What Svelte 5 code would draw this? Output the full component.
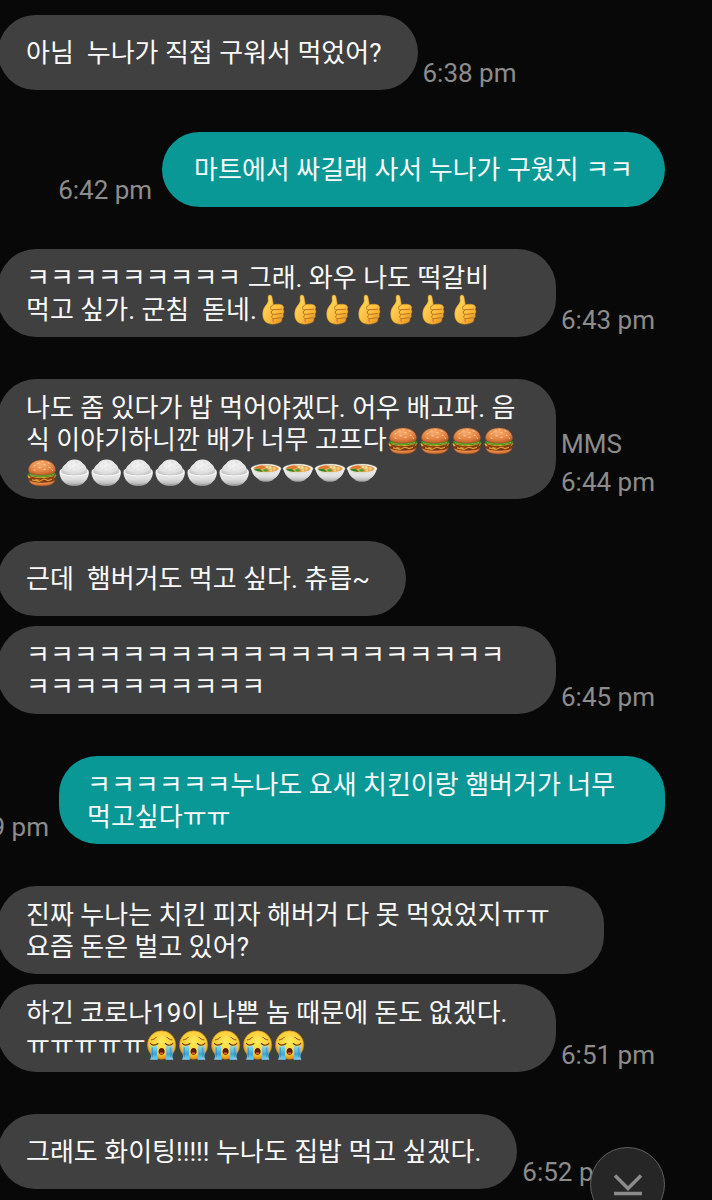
<script>
  const messages = [
    { lines: [{ text: '아님  누나가 직접 구워서 먹었어?' }], time: '6:38 pm' },
    { sent: true, lines: [{ text: '마트에서 싸길래 사서 누나가 구웠지 ㅋㅋ' }], time: '6:42 pm' },
    {
      size: 'wide',
      lines: [
        { text: 'ㅋㅋㅋㅋㅋㅋㅋㅋㅋ 그래. 와우 나도 떡갈비' },
        { text: '먹고 싶가. 군침  돋네.', emoji: Array(7).fill('thumb') }
      ],
      time: '6:43 pm'
    },
    {
      size: 'wide',
      lines: [
        { text: '나도 좀 있다가 밥 먹어야겠다. 어우 배고파. 음' },
        { text: '식 이야기하니깐 배가 너무 고프다', emoji: Array(4).fill('burger') },
        { text: '', emoji: ['burger', ...Array(6).fill('rice'), ...Array(4).fill('stew')] }
      ],
      kind: 'MMS',
      time: '6:44 pm'
    },
    { lines: [{ text: '근데  햄버거도 먹고 싶다. 츄릅~' }] },
    {
      size: 'wide',
      grouped: true,
      lines: [{ text: 'ㅋㅋㅋㅋㅋㅋㅋㅋㅋㅋㅋㅋㅋㅋㅋㅋㅋㅋㅋㅋ' }, { text: 'ㅋㅋㅋㅋㅋㅋㅋㅋㅋㅋ' }],
      time: '6:45 pm'
    },
    {
      sent: true,
      size: 'full',
      lines: [{ text: 'ㅋㅋㅋㅋㅋㅋ누나도 요새 치킨이랑 햄버거가 너무' }, { text: '먹고싶다ㅠㅠ' }],
      time: '6:49 pm'
    },
    {
      size: 'full',
      lines: [{ text: '진짜 누나는 치킨 피자 해버거 다 못 먹었었지ㅠㅠ' }, { text: '요즘 돈은 벌고 있어?' }]
    },
    {
      size: 'wide',
      grouped: true,
      lines: [
        { text: '하긴 코로나19이 나쁜 놈 때문에 돈도 없겠다.' },
        { text: 'ㅠㅠㅠㅠㅠ', emoji: Array(5).fill('cry') }
      ],
      time: '6:51 pm'
    },
    { lines: [{ text: '그래도 화이팅!!!!! 누나도 집밥 먹고 싶겠다.' }], time: '6:52 pm' }
  ];
</script>

<svg class="defs" width="0" height="0" aria-hidden="true">
  <defs>
    <linearGradient id="skin" x1="0" y1="0" x2=".8" y2="1">
      <stop offset="0" stop-color="#ffdc68" /><stop offset=".65" stop-color="#fdbf40" /><stop offset="1" stop-color="#e39426" />
    </linearGradient>
    <radialGradient id="bun" cx=".45" cy=".3" r=".75">
      <stop offset="0" stop-color="#f7ab6c" /><stop offset=".6" stop-color="#e58546" /><stop offset="1" stop-color="#b9581f" />
    </radialGradient>
    <radialGradient id="grain" cx=".5" cy=".35" r=".65">
      <stop offset="0" stop-color="#f4f4f4" /><stop offset=".7" stop-color="#e2e2e2" /><stop offset="1" stop-color="#c4c4c4" />
    </radialGradient>
    <linearGradient id="bowl" x1="0" y1="0" x2="0" y2="1">
      <stop offset="0" stop-color="#f4f4f4" /><stop offset=".6" stop-color="#dedede" /><stop offset="1" stop-color="#acacac" />
    </linearGradient>
    <radialGradient id="face" cx=".5" cy=".4" r=".6">
      <stop offset="0" stop-color="#ffec5c" /><stop offset=".7" stop-color="#fdcb35" /><stop offset="1" stop-color="#dc8c18" />
    </radialGradient>
    <linearGradient id="tear" x1="0" y1="0" x2="0" y2="1">
      <stop offset="0" stop-color="#8edcf5" /><stop offset=".6" stop-color="#3ba6d8" /><stop offset="1" stop-color="#7bd3ee" />
    </linearGradient>

    <symbol id="thumb" viewBox="0 0 32 32">
      <path d="M11.200 2.200C11.900.6 14 .5 14.800 2.300c.9 2.500.9 5.700 1.600 8.300 3-.5 6-.6 8 .1 2.300.8 2.900 3.100 1.700 4.700 1.300 1.300 1.100 3.500-.2 4.600.9 1.500.4 3.500-1 4.400.3 2-.7 3.700-2.600 4.400-3.800 1.600-8.700 2-12.100.3C7 27.500 5.700 24.300 5.700 20.500c0-3.200.6-5.800 2.200-8 1.800-2.400 3.400-4 3.300-6.500 0-1.500-.4-2.700 0-3.800z" fill="url(#skin)" stroke="#d08a22" stroke-width=".5" />
      <path d="M16.400 10.800c-1.900.6-3.200 2.100-2.900 3.700.2 1.200 1.500 1.500 3 1.300l8.200-.6M16 15.900c-2 .7-2.500 3.400-1 4.200.8.5 2 .3 3.200.2l6.300-.7M16 20.400c-1.500.7-1.900 3.200-.4 4 .9.400 2.200.2 3.200 0l5-.7M16.500 24.700c-1.100.7-1.300 2.500.1 3.300" fill="none" stroke="#bd7417" stroke-width="1" stroke-linecap="round" />
    </symbol>

    <symbol id="burger" viewBox="0 0 32 32">
      <path d="M3 23c0-1.500 26-1.500 26 0 .1 4-3.700 7-13 7S2.900 27 3 23z" fill="url(#bun)" stroke="#95501d" stroke-width=".5" />
      <path d="M2 21.500c0-2 28-2 28 0 .2 2-1.600 3.600-4.500 4.300-6 1.400-13 1.400-19 0C3.600 25.100 1.800 23.500 2 21.500z" fill="#7a3a14" />
      <path d="M1.200 19.500l29.500-.3-2.900 3-4.400-.6-3.200 2.200-4-2-4.800 3.400-4-3.200-4.700.2z" fill="#f3ad2d" />
      <path d="M3 19.600c5 3.400 20 3.200 26.400-.4l-2.100 3.200c-6 1.700-16.500 1.800-22.500-.2z" fill="#8c3d13" />
      <path d="M2 17.500c1-2 27-2 28 0 .7 1.500-.5 2.300-2 2.100-1.600 1-3.400 1.200-5 .8-2 1.300-4.200 1-6 .6-2 .9-4.300.3-5.700-.3-2 .5-4 .1-5.300-.8-2 .3-4.500-.8-4-2.400z" fill="#3c8526" />
      <path d="M4 18.700c5 2 19 2 24-.2" fill="none" stroke="#8abe3a" stroke-width=".8" />
      <path d="M2.500 14C2.700 8 8.400 4 16 4s13.300 4 13.500 10c0 3.800-5.800 5-13.500 5S2.500 17.800 2.500 14z" fill="url(#bun)" stroke="#a65524" stroke-width=".4" />
      <path d="M8 10l1-.6M12 7.200l1.200-.3M13 11.500l1.200.2M18 8.600l1.200.3M22 6.900l1 .4M23 11.300l1.100.2M18 13.300h1.200M8 14l1 .2M26 14l.7.4M16 5.700h1" stroke="#ffe0ad" stroke-width=".9" stroke-linecap="round" />
      <path d="M6 23.900l7 1.500 5-2.300 4 1.500 4-1.400" fill="none" stroke="#e5a338" stroke-width="1.100" />
    </symbol>

    <symbol id="rice" viewBox="0 0 32 32">
      <path d="M1.500 16.200c0-1.700 1-2.900 2.600-3.500h24c1.700.6 2.800 1.800 2.800 3.500-.1 5-2.500 8.700-6 11.200-3.500 3.200-13.800 3.200-17.400 0-3.500-2.500-5.900-6.200-6-11.200z" fill="url(#bowl)" />
      <path d="M3.500 16.500C2.900 12.600 5.500 9.500 8 7.800 10 5 13 3.600 16.400 3.600c3.800 0 6.800 1.500 8.500 4 2.500 1.800 4.700 5 4 8.900-4.500 4.200-21 4.200-25.400 0z" fill="url(#grain)" />
      <path d="M8.500 11l1 .4M13 8l1 .2M18 6.500l1 .3M22 9.500l.7.5M12 14l1-.3M17 11l1 .3M22 14l1-.2M17 16l1 .2" stroke="#cdcdcd" stroke-width=".7" stroke-linecap="round" />
      <path d="M2 16.500c3.500 4.500 25 4.500 28.400 0" fill="none" stroke="#fcfcfc" stroke-width=".9" />
      <path d="M8.500 27.200c4 1.900 11.500 1.900 15.600 0" fill="none" stroke="#999" stroke-width=".6" />
    </symbol>

    <symbol id="stew" viewBox="0 0 32 32">
      <path d="M1.200 12.500c1 5.200 3.600 8.800 7.600 11 2.300 2.800 12.100 2.800 14.400 0 4-2.200 6.700-5.800 7.700-11z" fill="url(#bowl)" />
      <ellipse cx="16" cy="12.500" rx="15" ry="4.400" fill="#f8f8f8" stroke="#bcbcbc" stroke-width=".4" />
      <ellipse cx="16" cy="12.700" rx="12.600" ry="3.500" fill="#e6a552" />
      <path d="M4.500 11.700c1.800-1.700 5-2.300 8.500-2.300l2.500 2.100-4.600 1.800z" fill="#e07a2c" />
      <path d="M4.200 13.200c2.600-.6 5.900-.8 8.800 2.400-4.500.2-7.600-.8-8.800-2.400z" fill="#28842e" />
      <path d="M13 14l3-1.500 3 2.200-4 1.100z" fill="#5a9b34" />
      <circle cx="20" cy="11.800" r="1.700" fill="#f7d9a0" /><circle cx="24.300" cy="12.500" r="1.500" fill="#f4cb84" />
      <circle cx="17" cy="10.900" r="1.200" fill="#f6dfaa" /><circle cx="21" cy="14.400" r="1.200" fill="#f5cf86" />
      <path d="M9.500 24c3.200 1.700 9.800 1.700 13 0" fill="none" stroke="#9a9a9a" stroke-width=".6" />
    </symbol>

    <symbol id="cry" viewBox="0 0 32 32">
      <circle cx="15.600" cy="16" r="14.200" fill="url(#face)" stroke="#c87b16" stroke-width=".5" />
      <path d="M4.600 16.500c1.800 1.200 4.600 1.300 6.400.1V29c.8.4 1 1 .7 1.700H4.400c-.5-.8 0-1.300.5-1.700zM20.200 16.600c1.800 1.200 4.600 1.100 6.400-.1V29c.7.4 1 1 .5 1.700h-7.400c-.4-.8 0-1.300.5-1.700z" fill="url(#tear)" />
      <path d="M6.300 18.500V28M24.800 18.500V28" stroke="#2588bd" stroke-width=".7" />
      <path d="M4.500 14.600c2 1.900 5 1.900 7.500-.1M19.300 14.500c2.400 2 5.500 2 7.500.1" fill="none" stroke="#603006" stroke-width="1.100" stroke-linecap="round" />
      <path d="M5.300 10.900c2-.3 3.900-1.200 5.200-2.800M20.700 8.100c1.300 1.600 3.200 2.500 5.200 2.800" fill="none" stroke="#8e5010" stroke-width="1" stroke-linecap="round" />
      <path d="M12.600 22.600c0-2.400 1.200-3.600 3-3.600s3 1.200 3 3.600-1.200 3.300-3 3.300-3-.9-3-3.300z" fill="#5a1b0a" />
      <path d="M13.500 24.200c1-1.200 3.200-1.200 4.200 0-.9 1.500-3.300 1.500-4.200 0z" fill="#e35d47" />
    </symbol>
  </defs>
</svg>

<main>
  {#each messages as message}
    <article class="row" class:sent={message.sent} class:grouped={message.grouped}>
      <p class="bubble {message.size ?? 'fit'}">
        {#each message.lines as line}
          <span class="line">{line.text}{#each line.emoji ?? [] as name}<svg class="emoji" viewBox="0 0 32 32" aria-hidden="true"><use href="#{name}" /></svg>{/each}</span>
        {/each}
      </p>
      {#if message.time}
        <div class="meta">
          {#if message.kind}<span>{message.kind}</span>{/if}
          <time>{message.time}</time>
        </div>
      {/if}
    </article>
  {/each}
</main>

<button class="latest" type="button" aria-label="↓">
  <svg viewBox="0 0 30 24" aria-hidden="true">
    <path d="M2 2.500L15 15.500 28 2.500M1 20.500H29" fill="none" stroke="#8c8c8c" stroke-width="3.500" />
  </svg>
</button>

<style>
  :global(body) {
    margin: 0;
    background: #080808;
    overflow-x: hidden;
  }

  .defs {
    position: absolute;
  }

  main {
    display: flex;
    flex-direction: column;
    gap: 42px;
    padding: 15px 47px 11px 0;
    overflow: hidden;
    font-family: Roboto, 'Noto Sans CJK KR', sans-serif;
    font-size: 26px;
    line-height: 32px;
  }

  .row {
    display: flex;
    align-items: flex-end;
    gap: 5px;
    margin-left: -2px;
  }

  .row.grouped {
    margin-top: -32px;
  }

  .row.sent {
    flex-direction: row-reverse;
    gap: 10px;
  }

  .bubble {
    box-sizing: border-box;
    display: flex;
    flex-direction: column;
    justify-content: center;
    min-height: 75px;
    margin: 0;
    padding: 0 28px;
    border-radius: 38px;
    background: #404040;
    color: #fafafa;
  }

  .bubble.fit {
    padding-right: 36px;
  }

  .sent .bubble {
    background: #0a9896;
  }

  .sent .bubble.fit {
    padding: 0 32px;
  }

  .bubble.wide,
  .bubble.full {
    padding-top: 13px;
    padding-bottom: 11px;
  }

  .bubble.wide {
    flex: 0 1 558px;
  }

  .bubble.full {
    flex: 0 0 606px;
  }

  .line {
    white-space: pre-wrap;
  }

  .emoji {
    width: 32px;
    height: 32px;
    vertical-align: top;
  }

  .meta {
    flex: none;
    display: flex;
    flex-direction: column;
    gap: 4px;
    color: #8c8c8c;
    line-height: 34px;
    white-space: nowrap;
  }

  .latest {
    position: fixed;
    right: 47px;
    bottom: -22px;
    display: flex;
    align-items: center;
    justify-content: center;
    width: 75px;
    height: 75px;
    padding: 0;
    border: 1px solid #606060;
    border-radius: 50%;
    background: #262626;
  }

  .latest svg {
    width: 30px;
    height: 24px;
  }
</style>
